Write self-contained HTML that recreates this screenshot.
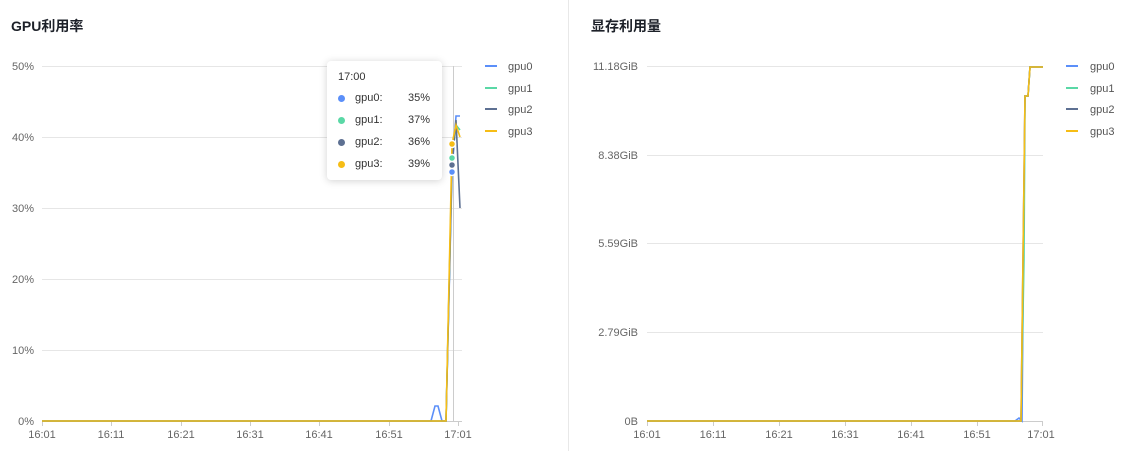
<!DOCTYPE html>
<html><head><meta charset="utf-8"><style>
html,body{margin:0;padding:0;background:#fff;width:1142px;height:451px;overflow:hidden;font-family:"Liberation Sans","Noto Sans CJK SC",sans-serif;}
.t{position:absolute;font-size:14px;color:#1d2129;font-weight:bold;}
svg{position:absolute;left:0;top:0}
.tip{position:absolute;left:327px;top:61px;width:115px;height:119px;background:#fff;border-radius:4px;box-shadow:0 1px 8px rgba(0,0,0,.18);font-size:11px;color:#333;}
.tip div{position:absolute;}
.dot{width:7px;height:7px;border-radius:50%;}
</style></head><body>
<div class="t" style="left:11px;top:16px">GPU利用率</div>
<div class="t" style="left:591px;top:16px">显存利用量</div>
<svg width="1142" height="451" font-family="Liberation Sans, sans-serif" font-size="11" fill="#666">
<line x1="568.5" y1="0" x2="568.5" y2="451" stroke="#e8e8e8"/>
<g stroke="#e6e6e6">
<line x1="42" y1="66.5" x2="462" y2="66.5"/><line x1="42" y1="137.5" x2="462" y2="137.5"/><line x1="42" y1="208.5" x2="462" y2="208.5"/><line x1="42" y1="279.5" x2="462" y2="279.5"/><line x1="42" y1="350.5" x2="462" y2="350.5"/>
<line x1="647" y1="66.5" x2="1043" y2="66.5"/><line x1="647" y1="155.5" x2="1043" y2="155.5"/><line x1="647" y1="243.5" x2="1043" y2="243.5"/><line x1="647" y1="332.5" x2="1043" y2="332.5"/>
</g>
<g stroke="#ccc">
<line x1="42" y1="421.5" x2="462" y2="421.5"/><line x1="647" y1="421.5" x2="1043" y2="421.5"/>
<line x1="453.5" y1="66" x2="453.5" y2="421" stroke="#ccc"/>
<path d="M42.5 421v5M111.5 421v5M181.5 421v5M250.5 421v5M319.5 421v5M389.5 421v5M458.5 421v5M647.5 421v5M713.5 421v5M779.5 421v5M845.5 421v5M911.5 421v5M977.5 421v5M1042.5 421v5"/>
</g>
<g text-anchor="end">
<text x="34" y="70">50%</text><text x="34" y="141">40%</text><text x="34" y="212">30%</text><text x="34" y="283">20%</text><text x="34" y="354">10%</text><text x="34" y="425">0%</text>
<text x="638" y="70">11.18GiB</text><text x="638" y="159">8.38GiB</text><text x="638" y="247">5.59GiB</text><text x="638" y="336">2.79GiB</text><text x="638" y="425">0B</text>
</g>
<g text-anchor="middle">
<text x="42" y="438">16:01</text><text x="111" y="438">16:11</text><text x="181" y="438">16:21</text><text x="250" y="438">16:31</text><text x="319" y="438">16:41</text><text x="389" y="438">16:51</text><text x="458" y="438">17:01</text>
<text x="647" y="438">16:01</text><text x="713" y="438">16:11</text><text x="779" y="438">16:21</text><text x="845" y="438">16:31</text><text x="911" y="438">16:41</text><text x="977" y="438">16:51</text><text x="1041" y="438">17:01</text>
</g>
<g fill="none" stroke-width="1.6">
<path d="M42 421H431L435 406H438L442 421H446L452 172L456 116L460 116" stroke="#5b8ff9"/>
<path d="M42 421H446L452 160L456 125L460 130" stroke="#5ad8a6"/>
<path d="M42 421H446L452 165L456 120L460 208" stroke="#5d7092"/>
<path d="M42 421H446L452 144L456 125L460 137" stroke="#f6bd16"/>
<path d="M647 421H1015L1019 418L1022 421L1025 96L1028 96L1030 67H1043" stroke="#5b8ff9"/>
<path d="M647 421H1021L1024 260L1025 96L1028 96L1030 67H1043" stroke="#5ad8a6"/>
<path d="M647 421H1021L1025 96L1028 96L1030 67H1043" stroke="#5d7092"/>
<path d="M647 421H1021L1025 96L1028 96L1030 67H1043" stroke="#f6bd16"/>
</g>
<g stroke="#fff" stroke-width="1.5">
<circle cx="452" cy="172" r="3.5" fill="#5b8ff9"/><circle cx="452" cy="165" r="3.5" fill="#5d7092"/><circle cx="452" cy="158" r="3.5" fill="#5ad8a6"/><circle cx="452" cy="144" r="3.5" fill="#f6bd16"/>
</g>
<g stroke-width="2">
<line x1="485" y1="66" x2="497" y2="66" stroke="#5b8ff9"/><line x1="485" y1="88" x2="497" y2="88" stroke="#5ad8a6"/><line x1="485" y1="109" x2="497" y2="109" stroke="#5d7092"/><line x1="485" y1="131" x2="497" y2="131" stroke="#f6bd16"/>
<line x1="1066" y1="66" x2="1078" y2="66" stroke="#5b8ff9"/><line x1="1066" y1="88" x2="1078" y2="88" stroke="#5ad8a6"/><line x1="1066" y1="109" x2="1078" y2="109" stroke="#5d7092"/><line x1="1066" y1="131" x2="1078" y2="131" stroke="#f6bd16"/>
</g>
<g fill="#555">
<text x="508" y="70">gpu0</text><text x="508" y="92">gpu1</text><text x="508" y="113">gpu2</text><text x="508" y="135">gpu3</text>
<text x="1090" y="70">gpu0</text><text x="1090" y="92">gpu1</text><text x="1090" y="113">gpu2</text><text x="1090" y="135">gpu3</text>
</g>
</svg>
<div class="tip">
<div style="left:11px;top:10px">17:00</div>
<div class="dot" style="left:11px;top:34px;background:#5b8ff9"></div><div style="left:28px;top:31px">gpu0:</div><div style="left:81px;top:31px">35%</div>
<div class="dot" style="left:11px;top:56px;background:#5ad8a6"></div><div style="left:28px;top:53px">gpu1:</div><div style="left:81px;top:53px">37%</div>
<div class="dot" style="left:11px;top:78px;background:#5d7092"></div><div style="left:28px;top:75px">gpu2:</div><div style="left:81px;top:75px">36%</div>
<div class="dot" style="left:11px;top:100px;background:#f6bd16"></div><div style="left:28px;top:97px">gpu3:</div><div style="left:81px;top:97px">39%</div>
</div>
</body></html>
